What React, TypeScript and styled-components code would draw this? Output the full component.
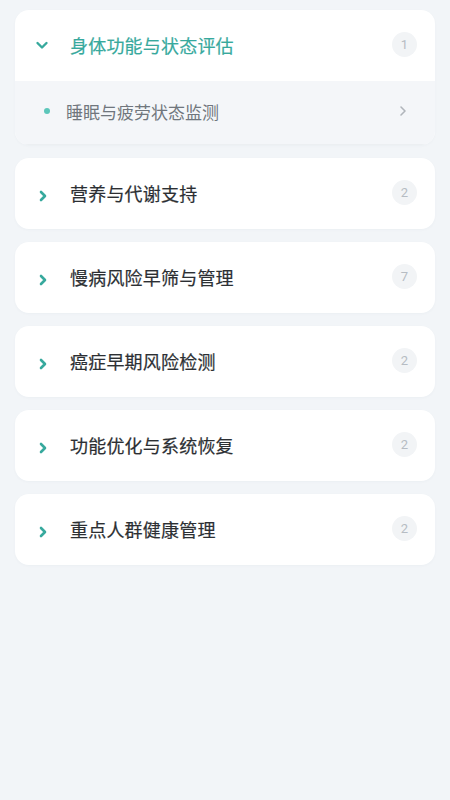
import React from 'react';
import styled, { createGlobalStyle } from 'styled-components';

const GlobalStyle = createGlobalStyle`
  html, body {
    margin: 0;
    padding: 0;
    background: #f2f5f8;
    font-family: "Noto Sans CJK SC", "Noto Sans", sans-serif;
  }
`;

const Page = styled.div`
  min-height: 800px;
  padding: 10px 15px;
  box-sizing: border-box;
  display: flex;
  flex-direction: column;
  gap: 13px;
`;

const Card = styled.div`
  background: #ffffff;
  border-radius: 14px;
  overflow: hidden;
  box-shadow: 0 1px 3px rgba(40, 60, 80, 0.03);
`;

const Header = styled.div`
  height: 71px;
  display: flex;
  align-items: center;
  padding: 0 18px 2px 15px;
  box-sizing: border-box;
`;

const Arrow = styled.span<{ $open?: boolean }>`
  width: 24px;
  height: 24px;
  display: flex;
  align-items: center;
  justify-content: center;
  margin-right: 16px;
  transform: translateY(${(p) => (p.$open ? '0' : '3px')});
`;

const Title = styled.div<{ $active?: boolean }>`
  flex: 1;
  font-size: 18px;
  font-weight: 400;
  color: ${(p) => (p.$active ? '#37a99d' : '#2c2f33')};
  letter-spacing: 0.2px;
  -webkit-text-stroke: 0.2px currentColor;
`;

const Badge = styled.span`
  width: 25px;
  height: 25px;
  border-radius: 50%;
  background: #f2f4f6;
  color: #b6bcc3;
  font-size: 13px;
  font-family: "Roboto", sans-serif;
  display: flex;
  align-items: center;
  justify-content: center;
`;

const SubList = styled.div`
  background: #f4f6f9;
`;

const SubRow = styled.div`
  height: 64px;
  display: flex;
  align-items: center;
  padding: 0 25px 3px 29px;
  box-sizing: border-box;
  border-bottom: 1px solid #eceff2;
`;

const Dot = styled.span`
  width: 6px;
  height: 6px;
  border-radius: 50%;
  background: #5cc6ba;
  margin-right: 16px;
`;

const SubTitle = styled.div`
  flex: 1;
  font-size: 17px;
  color: #70767d;
`;

const ChevronRight = ({ color, size = 14, w = 2.6, x = 5 }: { color: string; size?: number; w?: number; x?: number }) => (
  <svg width={size} height={size} viewBox="0 0 14 14" fill="none">
    <path d={`M${x} 3l4 4-4 4`} stroke={color} strokeWidth={w} strokeLinecap="round" strokeLinejoin="round" />
  </svg>
);

const ChevronDown = () => (
  <svg width="14" height="14" viewBox="0 0 14 14" fill="none">
    <path d="M2.5 5l4.5 4.5L11.5 5" stroke="#37a99d" strokeWidth="2.4" strokeLinecap="round" strokeLinejoin="round" />
  </svg>
);

const groups = [
  { title: '身体功能与状态评估', count: 1, open: true, items: ['睡眠与疲劳状态监测'] },
  { title: '营养与代谢支持', count: 2 },
  { title: '慢病风险早筛与管理', count: 7 },
  { title: '癌症早期风险检测', count: 2 },
  { title: '功能优化与系统恢复', count: 2 },
  { title: '重点人群健康管理', count: 2 },
];

export default function App() {
  return (
    <>
      <GlobalStyle />
      <Page>
        {groups.map((g) => (
          <Card key={g.title}>
            <Header>
              <Arrow $open={g.open}>
                {g.open ? <ChevronDown /> : <ChevronRight color="#37a99d" x={6} />}
              </Arrow>
              <Title $active={g.open}>{g.title}</Title>
              <Badge>{g.count}</Badge>
            </Header>
            {g.open && (
              <SubList>
                {g.items!.map((it) => (
                  <SubRow key={it}>
                    <Dot />
                    <SubTitle>{it}</SubTitle>
                    <ChevronRight color="#b0b5bb" size={14} w={1.6} />
                  </SubRow>
                ))}
              </SubList>
            )}
          </Card>
        ))}
      </Page>
    </>
  );
}
